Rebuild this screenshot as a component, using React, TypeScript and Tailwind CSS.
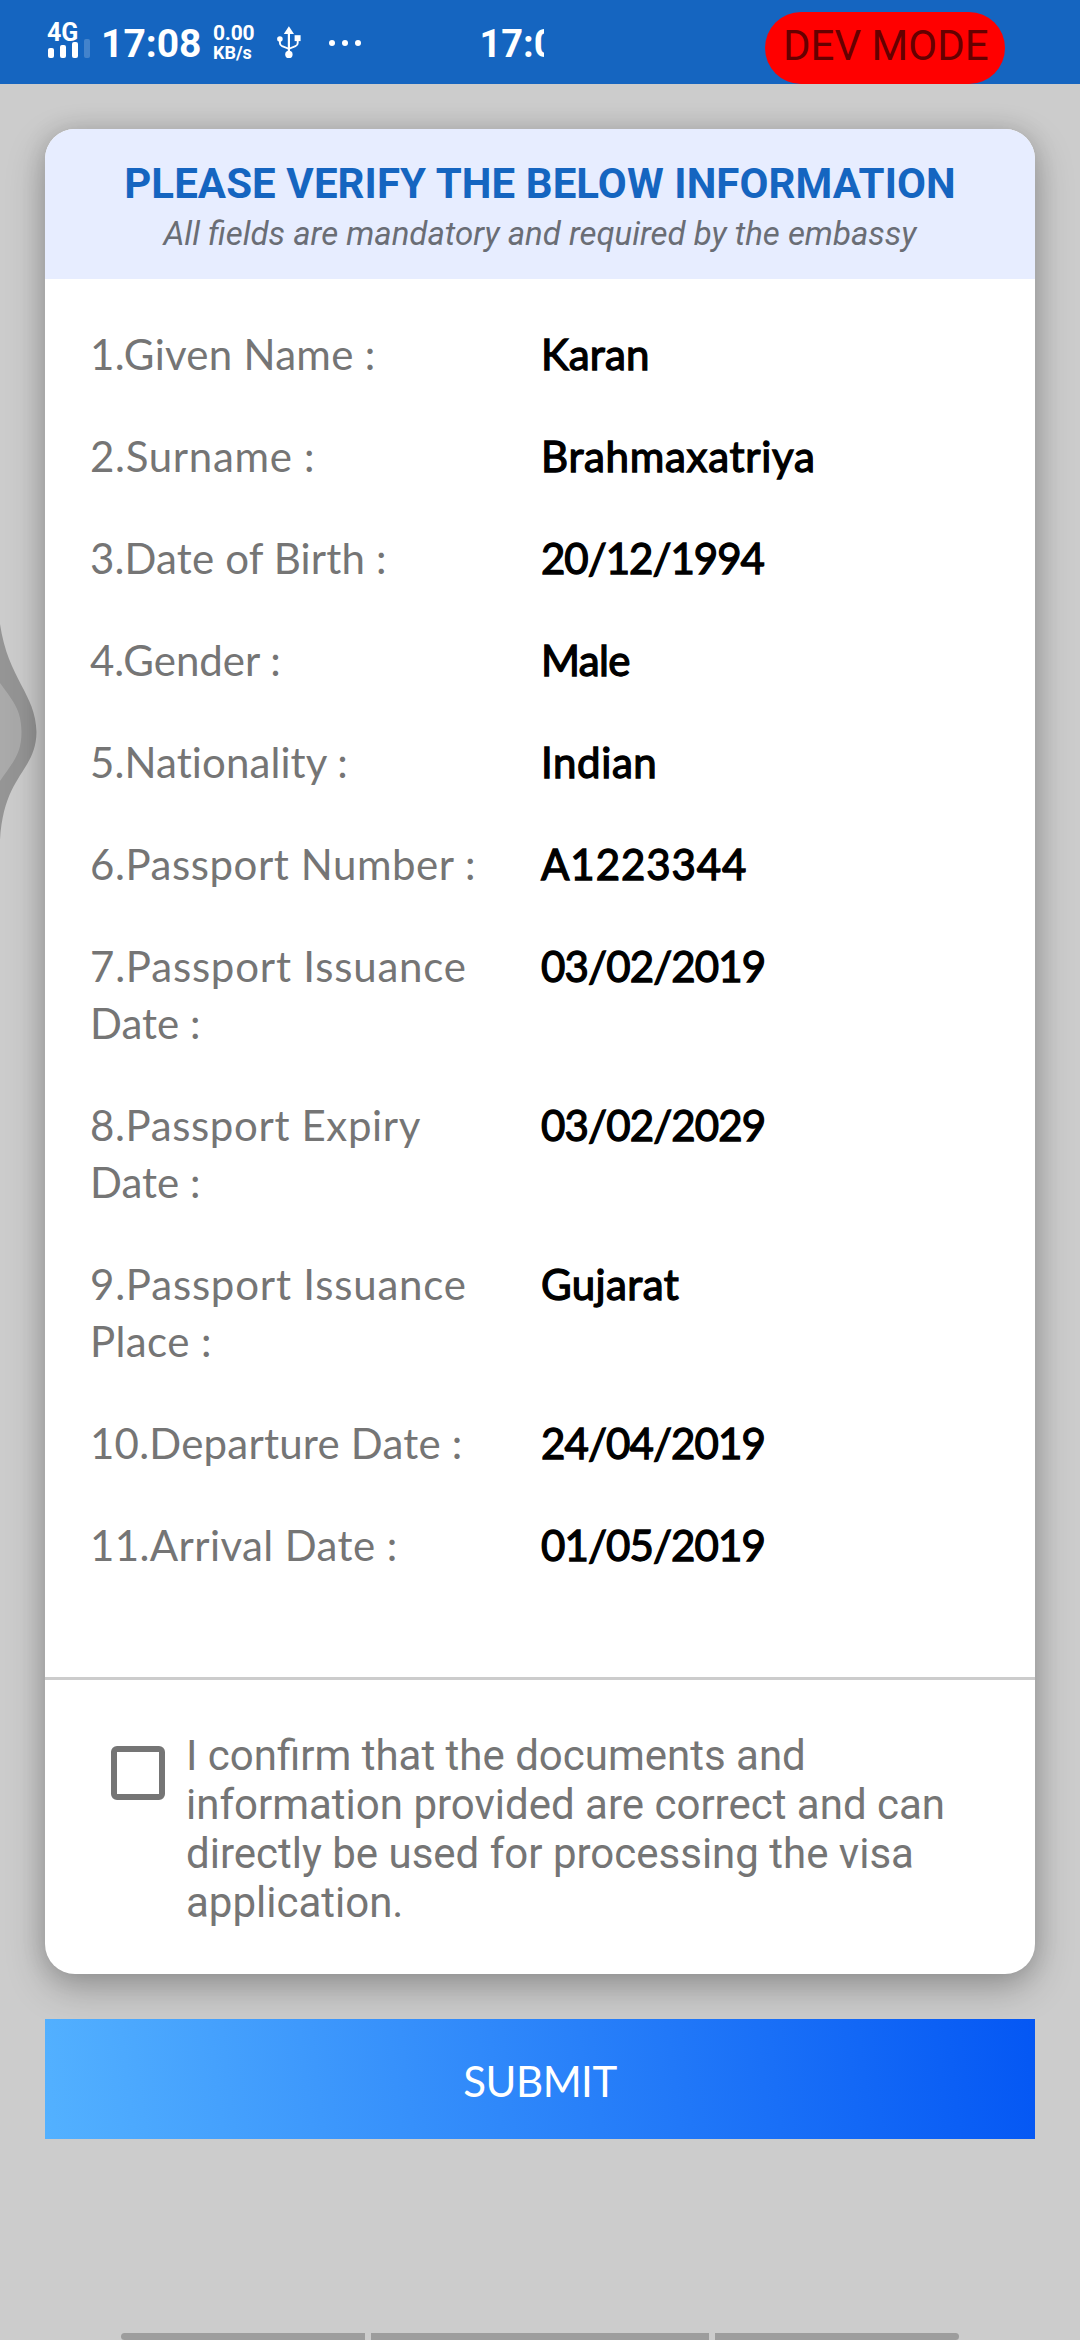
type Field = {
  label: string[];
  value: string;
  labelClass: string[];
  valueClass: string;
};

const FIELDS: Field[] = [
  { label: ["1.Given Name :"], value: "Karan", labelClass: ["tracking-[0.27px]"], valueClass: "tracking-[0.15px]" },
  { label: ["2.Surname :"], value: "Brahmaxatriya", labelClass: ["tracking-[0.69px]"], valueClass: "tracking-[0.7px]" },
  { label: ["3.Date of Birth :"], value: "20/12/1994", labelClass: ["tracking-[0.15px]"], valueClass: "tracking-[-1px]" },
  { label: ["4.Gender :"], value: "Male", labelClass: ["tracking-normal"], valueClass: "tracking-[-0.6px]" },
  { label: ["5.Nationality :"], value: "Indian", labelClass: ["tracking-[0.09px]"], valueClass: "tracking-[0.6px]" },
  { label: ["6.Passport Number :"], value: "A1223344", labelClass: ["tracking-[0.56px]"], valueClass: "tracking-[0.92px]" },
  { label: ["7.Passport Issuance", "Date :"], value: "03/02/2019", labelClass: ["tracking-[0.8px]", "tracking-normal"], valueClass: "tracking-[-0.85px]" },
  { label: ["8.Passport Expiry", "Date :"], value: "03/02/2029", labelClass: ["tracking-[0.63px]", "tracking-normal"], valueClass: "tracking-[-0.85px]" },
  { label: ["9.Passport Issuance", "Place :"], value: "Gujarat", labelClass: ["tracking-[0.8px]", "tracking-[0.4px]"], valueClass: "tracking-[0.4px]" },
  { label: ["10.Departure Date :"], value: "24/04/2019", labelClass: ["tracking-[0.22px]"], valueClass: "tracking-[-0.9px]" },
  { label: ["11.Arrival Date :"], value: "01/05/2019", labelClass: ["tracking-[0.4px]"], valueClass: "tracking-[-0.9px]" },
];

function UsbIcon() {
  return (
    <svg width="24" height="34" viewBox="0 0 24 34" fill="none" className="block">
      <path d="M11.9 9V29" stroke="#fff" strokeWidth="2.2" />
      <path d="M11.9 1.2L17 9H6.8Z" fill="#fff" />
      <path d="M2.9 14V18Q2.9 20.3 5.1 21.2L11.9 23.8L18.5 21.2Q20.7 20.3 20.7 18V14" stroke="#fff" strokeWidth="1.9" />
      <circle cx="2.9" cy="14" r="2.8" fill="#fff" />
      <rect x="17.6" y="10.2" width="6" height="5.9" fill="#fff" />
      <circle cx="11.9" cy="29.4" r="3.7" fill="#fff" />
    </svg>
  );
}

function StatusBar() {
  return (
    <header className="flex h-[84px] items-start overflow-hidden bg-[#1565c0] pl-[47px] font-bold text-white">
      <div className="mt-[23px] w-[54px] shrink-0">
        <div className="h-[18px] text-[25px] leading-[20px]">4G</div>
        <div className="-mt-[2px] flex h-[19px] items-end gap-[6px] pl-[0.5px]">
          <span className="h-[10px] w-[6px] rounded-[2px] bg-white" />
          <span className="h-[13px] w-[6px] rounded-[2px] bg-white" />
          <span className="h-[16px] w-[6px] rounded-[2px] bg-white" />
          <span className="h-[19px] w-[6px] rounded-[2px] bg-white/20" />
        </div>
      </div>
      <div className="mt-[20px] w-[112px] shrink-0 text-[39px] leading-[48px]">17:08</div>
      <div className="mt-[22px] w-[64px] shrink-0">
        <div className="text-[21px] leading-[22px] tracking-[-0.2px]">0.00</div>
        <div className="text-[18px] leading-[18px]">KB/s</div>
      </div>
      <div className="mt-[25px] w-[51.5px] shrink-0">
        <UsbIcon />
      </div>
      <div className="mt-[39.5px] flex w-[151px] shrink-0 gap-[7px]">
        <span className="h-[6px] w-[6px] rounded-full bg-white" />
        <span className="h-[6px] w-[6px] rounded-full bg-white" />
        <span className="h-[6px] w-[6px] rounded-full bg-white" />
      </div>
      <div className="mt-[22px] w-[64px] shrink-0 overflow-hidden">
        <div className="w-[110px] text-[38px] leading-[45px]">17:08</div>
      </div>
      <div className="ml-auto mr-[75px] mt-[12px] h-[72px] w-[240px] shrink-0 whitespace-nowrap rounded-full bg-[#ff0000] pl-[18px] pt-[9px] text-[42px] font-normal leading-[49px] text-[#660000]">
        DEV MODE
      </div>
    </header>
  );
}

export default function App() {
  return (
    <div className="relative flex h-[2340px] w-[1080px] flex-col overflow-hidden bg-[#cccccc] font-[Roboto,sans-serif]">
      <StatusBar />
      <main className="flex flex-1 flex-col px-[45px] pt-[45px]">
        <section className="overflow-hidden rounded-[30px] bg-white shadow-[0_14px_38px_rgba(0,0,0,0.26),0_0_24px_rgba(0,0,0,0.13)]">
          <div className="h-[150px] bg-[#e7edff] pt-[30px] text-center">
            <h1 className="text-[42px] font-bold leading-[49px] tracking-[0.09px] text-[#1565c0]">
              PLEASE VERIFY THE BELOW INFORMATION
            </h1>
            <p className="mt-[6px] text-[33px] italic leading-[39px] text-[#6a6d75]">
              All fields are mandatory and required by the embassy
            </p>
          </div>

          <dl className="flex flex-col gap-[45px] pb-[103px] pl-[45px] pt-[47px] font-[Lato,sans-serif] text-[42px] leading-[57px]">
            {FIELDS.map((f) => (
              <div key={f.label.join(" ")} className="flex">
                <dt className="w-[451px] text-[#757575]">
                  {f.label.map((line, i) => (
                    <span key={line} className={`block whitespace-nowrap ${f.labelClass[i]}`}>
                      {line}
                    </span>
                  ))}
                </dt>
                <dd className={`whitespace-nowrap text-black [-webkit-text-stroke:1.3px_#000] ${f.valueClass}`}>
                  {f.value}
                </dd>
              </div>
            ))}
          </dl>

          <label className="flex h-[297px] border-t-[3px] border-[#cccccc] pl-[66px] pt-[51px]">
            <span className="mt-[15px] h-[54px] w-[54px] shrink-0 rounded-[6px] border-[6px] border-[#757575]" />
            <span className="ml-[21px] w-[800px] text-[42px] leading-[49px] text-[#757575]">
              I confirm that the documents and
              <br />
              information provided are correct and can
              <br />
              directly be used for processing the visa
              <br />
              application.
            </span>
          </label>
        </section>

        <button className="mt-[45px] h-[120px] bg-linear-[83deg,#53b1ff,#0457f4] pt-[5px] font-[Lato,sans-serif] text-[42px] leading-[57px] tracking-[-0.5px] text-white">
          SUBMIT
        </button>
      </main>

      <div className="flex h-[7px] gap-[6px] px-[121px]">
        <span className="w-[244px] rounded-l-[4px] bg-[#9d9d9d]" />
        <span className="w-[338px] bg-[#9d9d9d]" />
        <span className="w-[244px] rounded-r-[4px] bg-[#9d9d9d]" />
      </div>

      <svg className="absolute left-0 top-[624px]" width="38" height="216" viewBox="0 0 38 216">
        <path d="M0 0C8 55 36 70 36.5 108C36 148 4 150 0 216Z" fill="#000" fillOpacity="0.27" />
        <path d="M0 59C12 76 21.5 85 21.5 108C21.5 131 12 139 0 157Z" fill="#fff" fillOpacity="0.2" />
      </svg>
    </div>
  );
}
